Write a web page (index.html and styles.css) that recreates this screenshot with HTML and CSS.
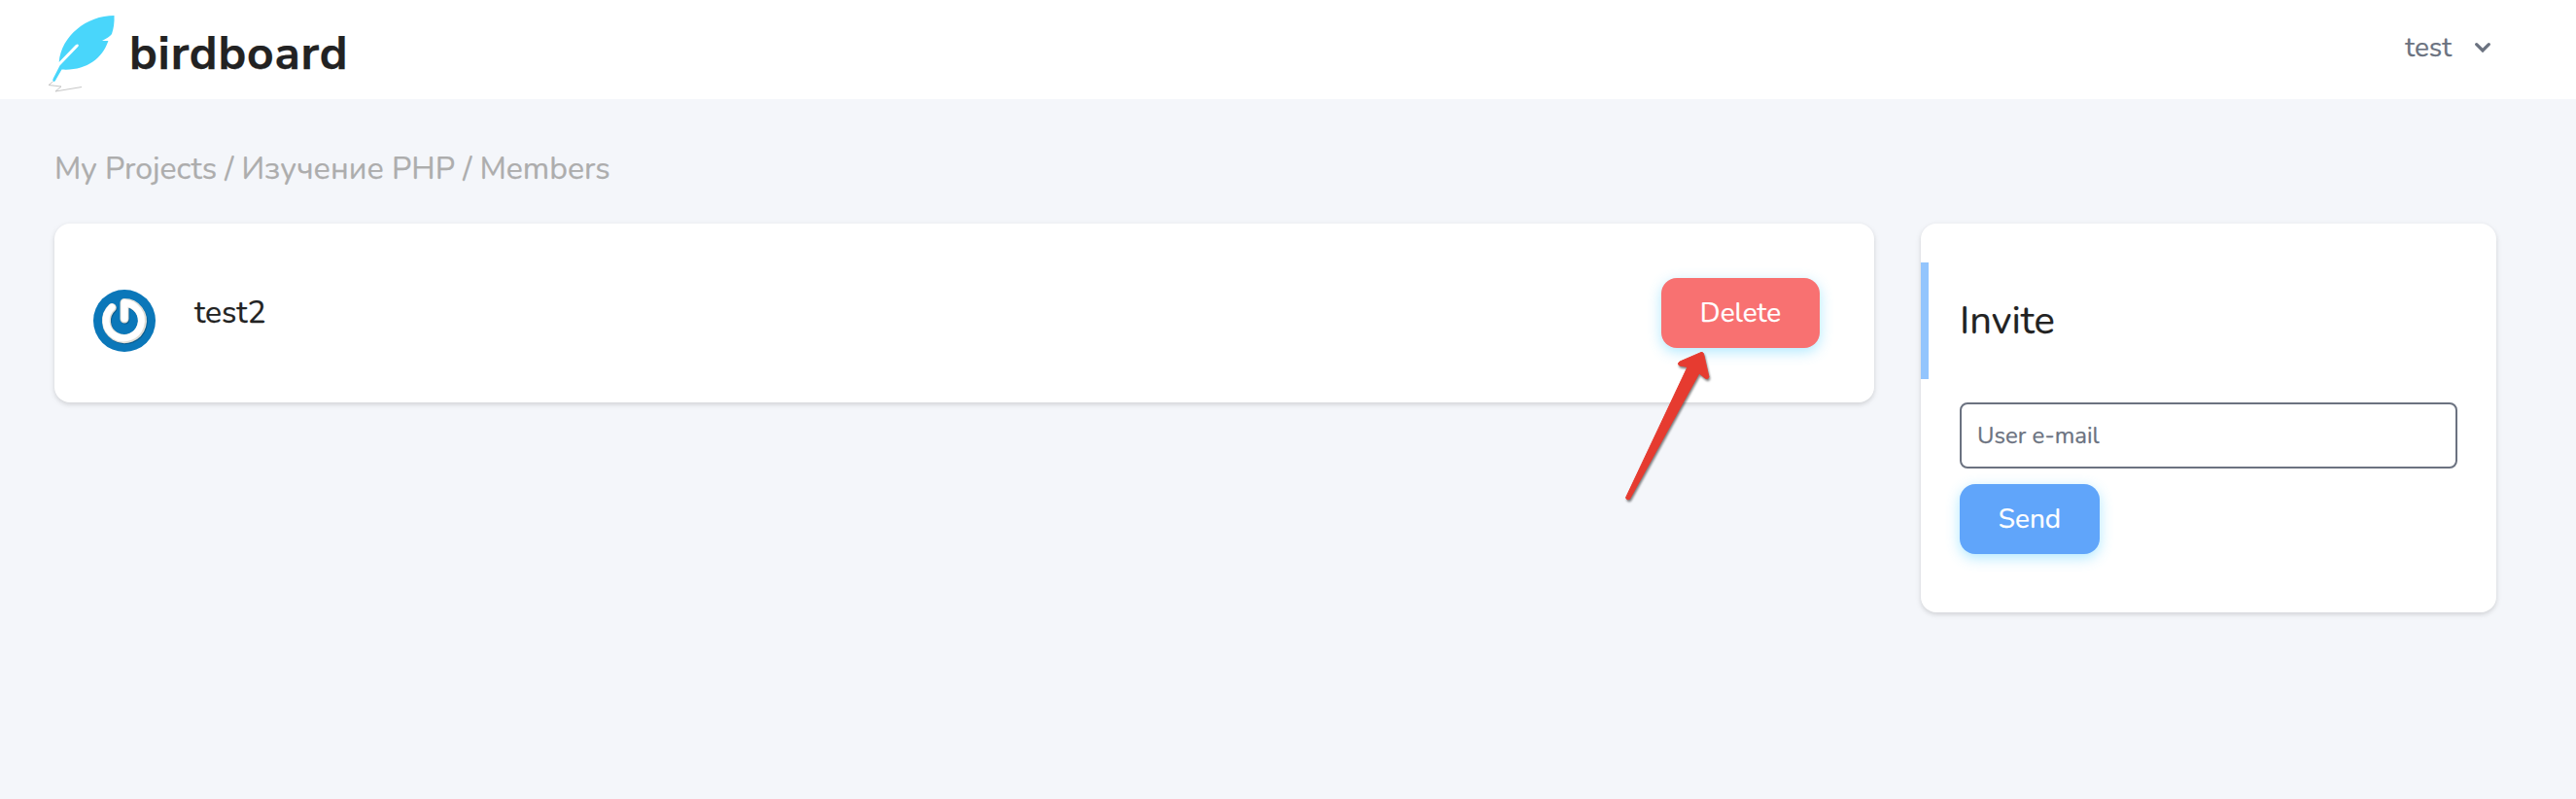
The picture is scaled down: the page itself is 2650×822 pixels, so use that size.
FILE: index.html
```html
<!DOCTYPE html>
<html lang="en">
<head>
<meta charset="utf-8">
<title>birdboard</title>
<link rel="stylesheet" href="styles.css">
</head>
<body>
<header class="navbar">
  <a class="brand">
    <svg class="brand-feather" viewBox="0 0 80 92" width="80" height="92">
      <path fill="#49d6fb" d="M73.500 8C45 8 19 29 16.700 56L33.500 38.500Q36 36.500 36.800 38.200Q37 39.500 35.800 40.500L17.500 59.500L10.600 73Q9.600 76 11.800 76Q13 75.500 14 73L19.500 63.500C44 65 61 53 67.400 34H61Q69 30 71 27Q74 18 73.500 8Z"/>
      <path fill="none" stroke="#c6c6c6" stroke-width="1" d="M10.500 76L6 79.500L19 81L13 86L40 81.500"/>
    </svg>
    <span class="brand-name">birdboard</span>
  </a>
  <div class="user-menu">
    <span class="user-name">test</span>
    <svg class="chevron" viewBox="0 0 16 10" width="16" height="10"><path d="M1.700 1.700L8 8L14.300 1.700" fill="none" stroke="#6b7280" stroke-width="3.200" stroke-linecap="round"/></svg>
  </div>
</header>
<main class="page">
  <nav class="breadcrumb">My Projects / Изучение PHP / Members</nav>
  <div class="columns">
    <section class="card member">
      <svg class="avatar" viewBox="0 0 64 64" width="64" height="64">
        <circle cx="32" cy="32" r="32" fill="#0b77b9"/>
        <g fill="none" stroke-linecap="round" stroke-linejoin="round">
          <path d="M19.300 18.500A18.500 18.500 0 1 0 32 13.500V30" transform="translate(.8 1)" stroke="#0a5c8f" stroke-width="9"/>
          <path d="M19.300 18.500A18.500 18.500 0 1 0 32 13.500V30" stroke="#deded8" stroke-width="9"/>
          <path d="M19 18.200A18.200 18.200 0 1 0 32 13.500V29.500" stroke="#fff" stroke-width="7"/>
        </g>
      </svg>
      <span class="member-name">test2</span>
      <button class="button button-delete">Delete</button>
      <svg class="arrow" viewBox="0 0 100 164" width="100" height="164">
        <path d="M83 11.500Q85 11 85.500 13L91 37Q90 40 87 38L81 33L9.500 162.500Q6.500 164 5.500 161L69 26.500L60.500 25Q58 23 61 21Z" fill="#e63b30" stroke="#e63b30" stroke-linejoin="round"/>
      </svg>
    </section>
    <aside class="card invite">
      <h3 class="invite-title">Invite</h3>
      <form class="invite-form">
        <input class="email" type="text" placeholder="User e-mail">
        <button class="button button-send" type="button">Send</button>
      </form>
    </aside>
  </div>
</main>
</body>
</html>
```
FILE: styles.css
```css
* { box-sizing: border-box; }
body {
  margin: 0;
  min-height: 822px;
  background: #f4f6fa;
  color: #222;
  font-family: Nunito, Lato, "Open Sans", sans-serif;
  -webkit-text-stroke: .25px currentColor;
}
.navbar {
  height: 102px;
  padding: 0 85px 0 44px;
  display: flex;
  justify-content: space-between;
  background: #fff;
}
.brand { display: flex; }
.brand-feather { margin-top: 8px; }
.brand-name {
  margin: 23px 0 0 9px;
  font-family: "Nunito Sans", Mulish, Muli, Nunito, sans-serif;
  font-size: 48px;
  line-height: 64px;
  font-weight: 700;
  letter-spacing: .8px;
}
.user-menu {
  height: 98px;
  display: flex;
  align-items: center;
  gap: 24px;
  color: #6b7280;
}
.user-name { font-size: 28px; line-height: 40px; }
.chevron { margin-right: 3px; }
.page { padding: 48px 82px 0 56px; }
.breadcrumb {
  height: 80px;
  font-size: 32px;
  line-height: 48px;
  color: #adadad;
  white-space: nowrap;
}
.columns {
  display: grid;
  grid-template-columns: 1872px 592px;
  gap: 48px;
  align-items: start;
}
.card {
  background: #fff;
  border-radius: 16px;
  box-shadow: 0 2px 6px rgba(0, 0, 0, .1), 0 2px 4px rgba(0, 0, 0, .06);
}
.member {
  position: relative;
  height: 184px;
  padding: 56px 56px 56px 40px;
  display: flex;
  align-items: flex-start;
}
.avatar { margin-top: 12px; }
.member-name { margin: 12px auto 0 40px; font-size: 32px; line-height: 48px; }
.button {
  height: 72px;
  padding: 0;
  border: 0;
  border-radius: 16px;
  color: #fff;
  font-family: inherit;
  font-size: 28px;
  line-height: 40px;
  box-shadow: 0 4px 14px rgba(71, 205, 255, .43);
}
.button-delete { width: 163px; background: #f87171; }
.button-send { width: 144px; background: #60a5fa; }
.arrow {
  position: absolute;
  left: 1611px;
  top: 121px;
  overflow: visible;
  filter: drop-shadow(1px 2px 1px rgba(0, 0, 0, .5));
}
.invite { height: 400px; padding: 40px 0; }
.invite-title {
  height: 120px;
  margin: 0 0 24px;
  padding-left: 32px;
  border-left: 8px solid #93c5fd;
  font-size: 40px;
  line-height: 120px;
  font-weight: 400;
}
.invite-form {
  padding: 0 40px;
  display: flex;
  flex-direction: column;
  align-items: flex-start;
  gap: 16px;
}
.email {
  width: 512px;
  height: 68px;
  padding: 0 16px;
  border: 2px solid #6b7280;
  border-radius: 8px;
  background: #fff;
  font-family: inherit;
  font-size: 24px;
}
.email::placeholder { color: #6b7280; opacity: 1; }
```
